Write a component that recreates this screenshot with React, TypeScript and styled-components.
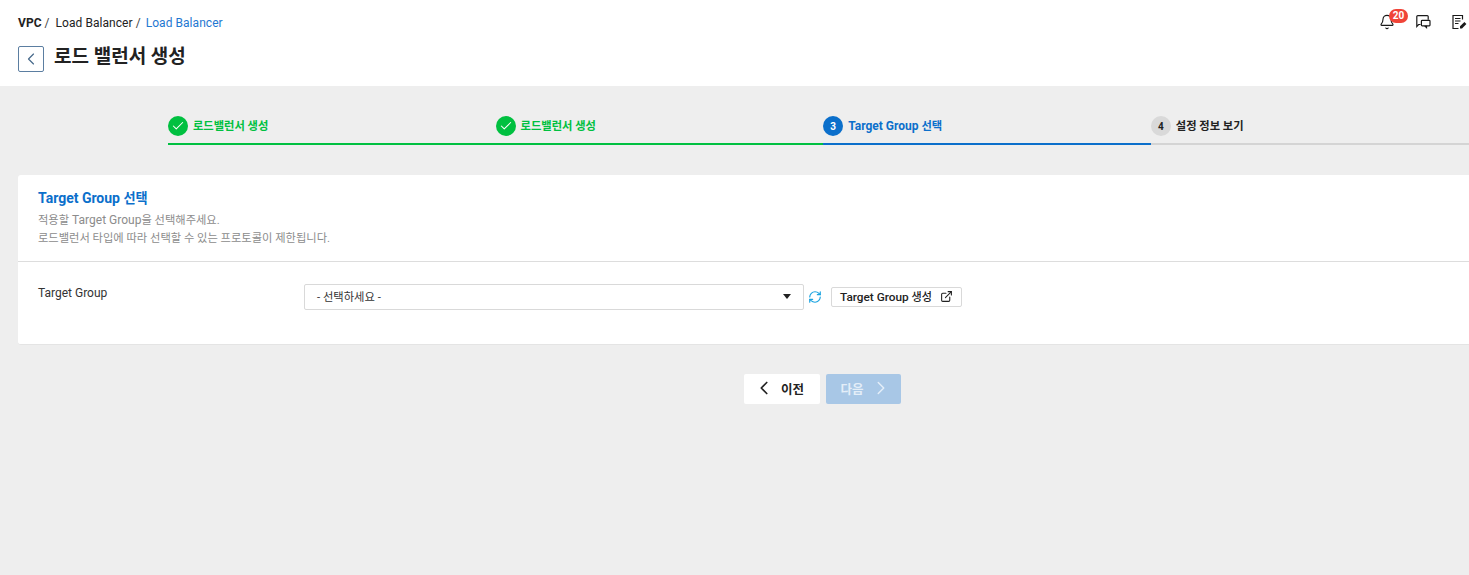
import { FC, ReactNode } from 'react'
import styled, { createGlobalStyle } from 'styled-components'
import { Bell, Check, ChevronLeft, ChevronRight, ExternalLink, RefreshCw } from 'lucide-react'

const BLUE = '#0b6fcb'
const GREEN = '#00c040'
const FONT = `Roboto, "Noto Sans CJK KR", sans-serif`

const GlobalStyle = createGlobalStyle`
  html, body {
    margin: 0;
    height: 100%;
    background: #eeeeee;
    font-family: ${FONT};
    color: #222;
  }
  * { box-sizing: border-box; }
`
const Page = styled.div`
  width: 100vw;
  height: 100vh;
  overflow: hidden;
`
const Ko = styled.span`
  font-size: 0.94em;
`
const Header = styled.header`
  height: 86px;
  background: #fff;
  padding: 15px 0 0 18px;
  display: flex;
  justify-content: space-between;
`
const HeaderLeft = styled.div`
  display: flex;
  flex-direction: column;
`
const Breadcrumb = styled.nav`
  display: flex;
  height: 16px;
  align-items: center;
  font-size: 12px;
  letter-spacing: 0.05px;
  white-space: pre;
`
const Crumb = styled.span<{ $bold?: boolean; $active?: boolean }>`
  font-weight: ${(p) => (p.$bold ? 700 : 400)};
  color: ${(p) => (p.$active ? '#1f78d1' : '#222')};
  margin-right: ${(p) => (p.$bold ? 6 : 5)}px;
  &:not(:last-child)::after {
    content: ' /';
    font-weight: 400;
    color: #444;
  }
`
const TitleRow = styled.div`
  display: flex;
  align-items: flex-start;
  gap: 10px;
  margin-top: 15px;
`
const BackButton = styled.button`
  width: 26px;
  height: 26px;
  padding: 0;
  border: 1px solid #5b7ea1;
  border-radius: 2px;
  background: #fff;
  color: #46688a;
  display: flex;
  align-items: center;
  justify-content: center;
`
const Title = styled.h1`
  margin: 0;
  font-size: 19px;
  line-height: 22px;
  font-weight: 700;
  color: #222;
`
const HeaderIcons = styled.div`
  display: flex;
  align-items: flex-start;
  margin-top: -1px;
`
const IconSlot = styled.span<{ $width: number; $pull?: number }>`
  position: relative;
  display: flex;
  justify-content: flex-start;
  width: ${(p) => p.$width}px;
  margin-left: ${(p) => p.$pull ?? 0}px;
  color: #1a1a1a;
`
const Badge = styled.span`
  position: absolute;
  top: -5px;
  left: 10px;
  height: 14px;
  min-width: 19px;
  padding: 0 3px;
  border-radius: 7px;
  background: #f04438;
  color: #fff;
  font-size: 10px;
  font-weight: 700;
  line-height: 14px;
  text-align: center;
`
const Main = styled.main`
  width: 1609px;
  margin-left: 18px;
`
const Stepper = styled.ol`
  display: flex;
  list-style: none;
  margin: 0;
  padding: 30px 0 0 150px;
`
const Step = styled.li<{ $color: string }>`
  width: 327.6px;
  height: 29px;
  display: flex;
  align-items: flex-start;
  gap: 5px;
  border-bottom: 2px solid ${(p) => p.$color};
`
const StepDot = styled.span<{ $bg: string; $fg: string }>`
  width: 20px;
  height: 20px;
  flex: none;
  border-radius: 50%;
  background: ${(p) => p.$bg};
  color: ${(p) => p.$fg};
  font-size: 10px;
  font-weight: 700;
  display: flex;
  align-items: center;
  justify-content: center;
`
const StepLabel = styled.span<{ $color: string }>`
  font-size: 12px;
  font-weight: 700;
  line-height: 20px;
  color: ${(p) => p.$color};
`
const Card = styled.section`
  width: 1600px;
  height: 170px;
  margin-top: 30px;
  background: #fff;
  border-bottom: 1px solid #e4e4e4;
  border-radius: 3px;
`
const CardHead = styled.div`
  height: 87px;
  padding: 14px 20px 0;
  border-bottom: 1px solid #ddd;
`
const CardTitle = styled.h2`
  margin: 0 0 4px;
  font-size: 14px;
  line-height: 18px;
  font-weight: 700;
  color: ${BLUE};
`
const CardDesc = styled.p`
  margin: 0;
  font-size: 12px;
  line-height: 17.5px;
  color: #8c8c8c;
`
const FormRow = styled.div`
  display: flex;
  align-items: flex-start;
  padding: 22px 20px 0;
`
const FieldLabel = styled.label`
  width: 266px;
  font-size: 12px;
  line-height: 18px;
  color: #333;
`
const SelectBox = styled.div`
  width: 500px;
  height: 26px;
  padding: 0 12px 2px;
  border: 1px solid #d9d9d9;
  border-radius: 2px;
  display: flex;
  align-items: center;
  justify-content: space-between;
  font-size: 11.3px;
  color: #333;
`
const Caret = styled.span`
  width: 0;
  height: 0;
  border-left: 4.5px solid transparent;
  border-right: 4.5px solid transparent;
  border-top: 5px solid #222;
`
const Refresh = styled.span`
  display: flex;
  margin: 6px 9px 0 4px;
  color: #1aa3e0;
`
const OutlineButton = styled.button`
  height: 20px;
  margin-top: 3px;
  padding: 0 8px 2px;
  border: 1px solid #d9d9d9;
  border-radius: 2px;
  background: #fff;
  color: #222;
  display: flex;
  align-items: center;
  gap: 8px;
  font-family: ${FONT};
  font-size: 11.8px;
  font-weight: 500;
`
const Actions = styled.div`
  display: flex;
  justify-content: center;
  gap: 6px;
  margin-top: 29px;
`
const NavButton = styled.button<{ $primary?: boolean }>`
  width: 75.5px;
  height: 30px;
  padding: ${(p) => (p.$primary ? '0 0 2px 15px' : '0 0 2px 9px')};
  border: none;
  border-radius: 2px;
  background: ${(p) => (p.$primary ? '#a8c7e6' : '#fff')};
  color: ${(p) => (p.$primary ? '#e4eef8' : '#222')};
  display: flex;
  align-items: center;
  gap: 6px;
  font-family: ${FONT};
  font-size: 12.5px;
  font-weight: 700;
`

const ChatIcon = () => (
  <svg width='16' height='16' viewBox='0 0 16 16' fill='none' stroke='currentColor' strokeWidth='1.2'>
    <path d='M5.5 10.5H3.6L1.8 12.4V2.6a1 1 0 0 1 1-1h9.4a1 1 0 0 1 1 1v3.2' />
    <rect x='6.4' y='6.4' width='8.6' height='5.4' rx='0.8' fill='#fff' />
    <path d='M11.5 11.8v1.8l-1.8-1.8' />
  </svg>
)
const NoteIcon = () => (
  <svg width='16' height='16' viewBox='0 0 16 16' fill='none' stroke='currentColor' strokeWidth='1.2'>
    <path d='M11.5 5.5V1.5H2v13h5.5' />
    <path d='M4 4.5h5.5M4 7h5.5M4 9.5h3.5' />
    <path d='M9 14.5v-2.2l4.4-4.4 2 2-4.4 4.6z' fill='currentColor' stroke='none' />
  </svg>
)

const StepItem: FC<{ color: string; dot: ReactNode; dotBg: string; dotFg: string; children: ReactNode; labelColor: string }> = ({
  color,
  dot,
  dotBg,
  dotFg,
  children,
  labelColor,
}) => (
  <Step $color={color}>
    <StepDot $bg={dotBg} $fg={dotFg}>{dot}</StepDot>
    <StepLabel $color={labelColor}>{children}</StepLabel>
  </Step>
)

export default function App() {
  const done = <Check size={14} strokeWidth={1.8} />
  return (
    <Page>
      <GlobalStyle />
      <Header>
        <HeaderLeft>
          <Breadcrumb>
            <Crumb $bold>VPC</Crumb>
            <Crumb>Load Balancer</Crumb>
            <Crumb $active>Load Balancer</Crumb>
          </Breadcrumb>
          <TitleRow>
            <BackButton><ChevronLeft size={20} strokeWidth={1.4} /></BackButton>
            <Title>로드 밸런서 생성</Title>
          </TitleRow>
        </HeaderLeft>
        <HeaderIcons>
          <IconSlot $width={37}>
            <Bell size={16} strokeWidth={1.7} />
            <Badge>20</Badge>
          </IconSlot>
          <IconSlot $width={36} $pull={-1}><ChatIcon /></IconSlot>
          <IconSlot $width={18}><NoteIcon /></IconSlot>
        </HeaderIcons>
      </Header>
      <Main>
        <Stepper>
          <StepItem color={GREEN} dot={done} dotBg={GREEN} dotFg='#fff' labelColor={GREEN}><Ko>로드밸런서 생성</Ko></StepItem>
          <StepItem color={GREEN} dot={done} dotBg={GREEN} dotFg='#fff' labelColor={GREEN}><Ko>로드밸런서 생성</Ko></StepItem>
          <StepItem color={BLUE} dot='3' dotBg={BLUE} dotFg='#fff' labelColor={BLUE}>Target Group <Ko>선택</Ko></StepItem>
          <StepItem color='#d4d4d4' dot='4' dotBg='#d9d9d9' dotFg='#222' labelColor='#222'><Ko>설정 정보 보기</Ko></StepItem>
        </Stepper>
        <Card>
          <CardHead>
            <CardTitle>Target Group <Ko>선택</Ko></CardTitle>
            <CardDesc><Ko>적용할</Ko> Target Group<Ko>을 선택해주세요.</Ko></CardDesc>
            <CardDesc><Ko>로드밸런서 타입에 따라 선택할 수 있는 프로토콜이 제한됩니다.</Ko></CardDesc>
          </CardHead>
          <FormRow>
            <FieldLabel>Target Group</FieldLabel>
            <SelectBox>
              - 선택하세요 -
              <Caret />
            </SelectBox>
            <Refresh><RefreshCw size={14} strokeWidth={2} /></Refresh>
            <OutlineButton>
              <span>Target Group <Ko>생성</Ko></span>
              <ExternalLink size={13} strokeWidth={2} />
            </OutlineButton>
          </FormRow>
        </Card>
        <Actions>
          <NavButton><ChevronLeft size={22} strokeWidth={1.8} />이전</NavButton>
          <NavButton $primary>다음<ChevronRight size={22} strokeWidth={1.6} /></NavButton>
        </Actions>
      </Main>
    </Page>
  )
}
